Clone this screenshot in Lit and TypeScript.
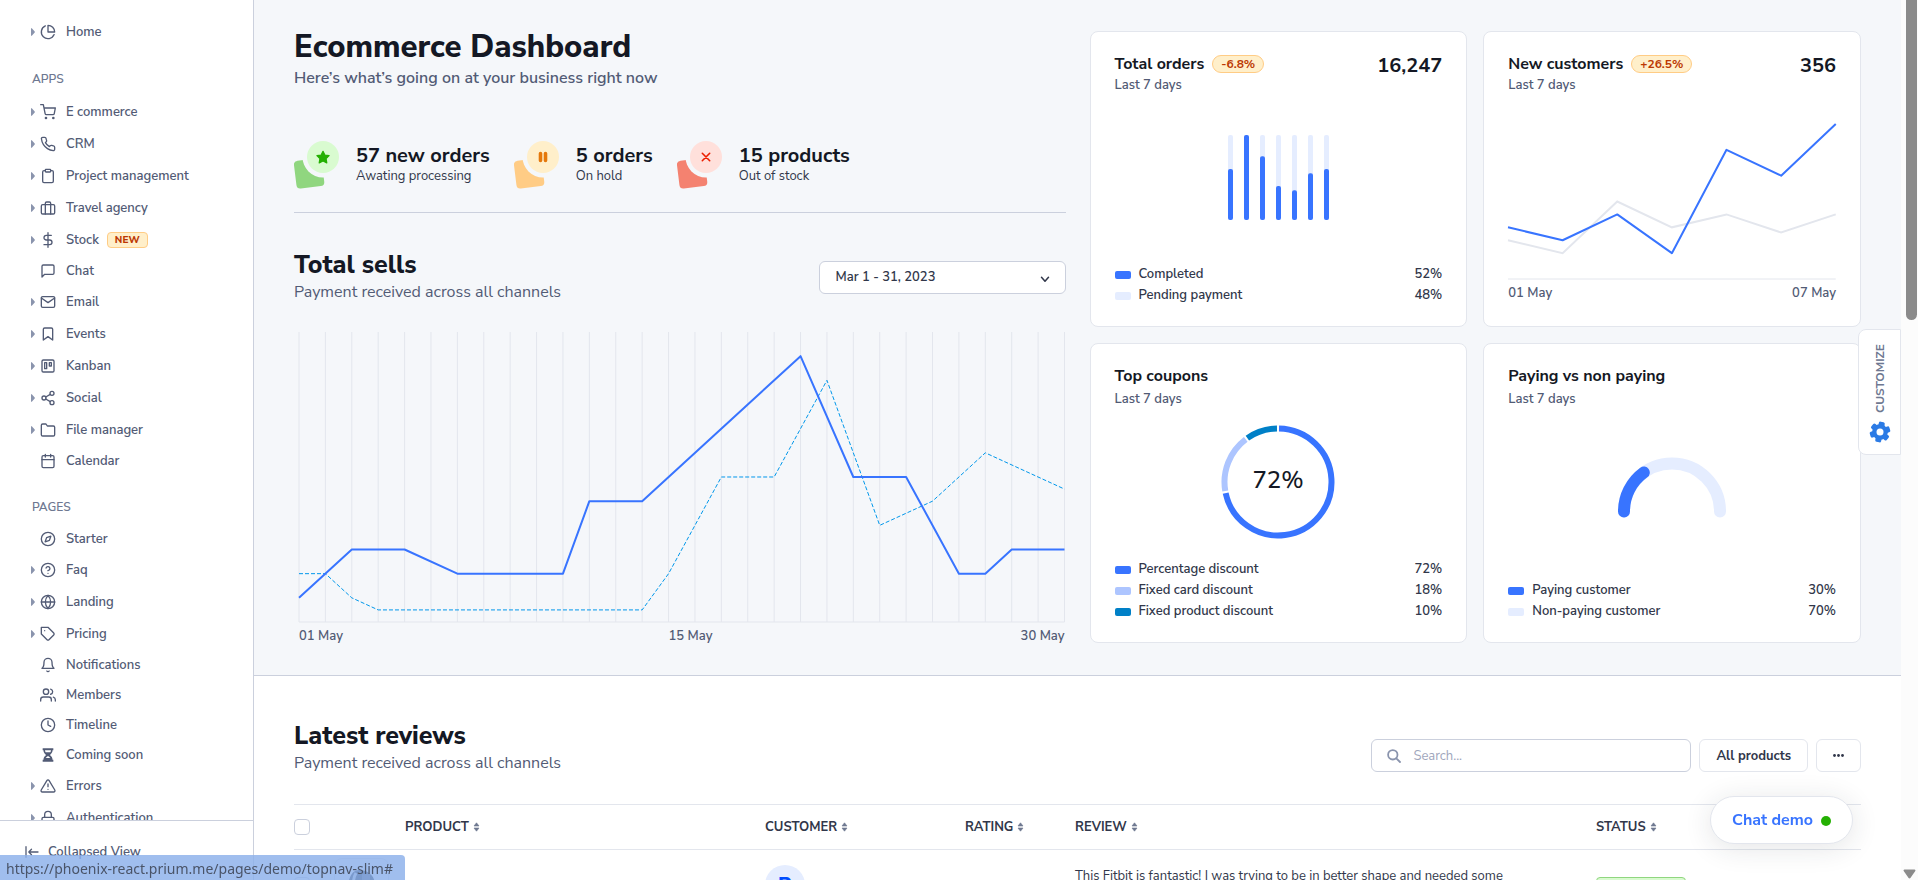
import { LitElement, html, svg, css, nothing, type TemplateResult } from "lit";
import { customElement, property } from "lit/decorators.js";

const ICONS: Record<string, TemplateResult> = {
  pie: svg`<path d="M21.21 15.89A10 10 0 1 1 8 2.83"/><path d="M22 12A10 10 0 0 0 12 2v10z"/>`,
  cart: svg`<circle cx="9" cy="21" r="1"/><circle cx="20" cy="21" r="1"/><path d="M1 1h4l2.68 13.39a2 2 0 0 0 2 1.61h9.72a2 2 0 0 0 2-1.61L23 6H6"/>`,
  phone: svg`<path d="M22 16.92v3a2 2 0 0 1-2.18 2 19.79 19.79 0 0 1-8.63-3.07 19.5 19.5 0 0 1-6-6 19.79 19.79 0 0 1-3.07-8.67A2 2 0 0 1 4.11 2h3a2 2 0 0 1 2 1.72 12.84 12.84 0 0 0 .7 2.81 2 2 0 0 1-.45 2.11L8.09 9.91a16 16 0 0 0 6 6l1.27-1.27a2 2 0 0 1 2.11-.45 12.84 12.84 0 0 0 2.81.7A2 2 0 0 1 22 16.92z"/>`,
  clipboard: svg`<path d="M16 4h2a2 2 0 0 1 2 2v14a2 2 0 0 1-2 2H6a2 2 0 0 1-2-2V6a2 2 0 0 1 2-2h2"/><rect x="8" y="2" width="8" height="4" rx="1"/>`,
  briefcase: svg`<rect x="2" y="7" width="20" height="14" rx="2"/><path d="M16 21V5a2 2 0 0 0-2-2h-4a2 2 0 0 0-2 2v16"/>`,
  dollar: svg`<path d="M12 1v22M17 5H9.5a3.5 3.5 0 0 0 0 7h5a3.5 3.5 0 0 1 0 7H6"/>`,
  message: svg`<path d="M21 15a2 2 0 0 1-2 2H7l-4 4V5a2 2 0 0 1 2-2h14a2 2 0 0 1 2 2z"/>`,
  mail: svg`<path d="M4 4h16a2 2 0 0 1 2 2v12a2 2 0 0 1-2 2H4a2 2 0 0 1-2-2V6a2 2 0 0 1 2-2z"/><path d="M22 6l-10 7L2 6"/>`,
  bookmark: svg`<path d="M19 21l-7-5-7 5V5a2 2 0 0 1 2-2h10a2 2 0 0 1 2 2z"/>`,
  trello: svg`<rect x="3" y="3" width="18" height="18" rx="2"/><rect x="7" y="7" width="3" height="9"/><rect x="14" y="7" width="3" height="5"/>`,
  share: svg`<circle cx="18" cy="5" r="3"/><circle cx="6" cy="12" r="3"/><circle cx="18" cy="19" r="3"/><path d="M8.59 13.51l6.83 3.98M15.41 6.51l-6.82 3.98"/>`,
  folder: svg`<path d="M22 19a2 2 0 0 1-2 2H4a2 2 0 0 1-2-2V5a2 2 0 0 1 2-2h5l2 3h9a2 2 0 0 1 2 2z"/>`,
  calendar: svg`<rect x="3" y="4" width="18" height="18" rx="2"/><path d="M16 2v4M8 2v4M3 10h18"/>`,
  compass: svg`<circle cx="12" cy="12" r="10"/><path d="M16.24 7.76l-2.12 6.36-6.36 2.12 2.12-6.36z"/>`,
  help: svg`<circle cx="12" cy="12" r="10"/><path d="M9.09 9a3 3 0 0 1 5.83 1c0 2-3 3-3 3M12 17h.01"/>`,
  globe: svg`<circle cx="12" cy="12" r="10"/><path d="M2 12h20M12 2a15.3 15.3 0 0 1 4 10 15.3 15.3 0 0 1-4 10 15.3 15.3 0 0 1-4-10 15.3 15.3 0 0 1 4-10z"/>`,
  tag: svg`<path d="M20.59 13.41l-7.17 7.17a2 2 0 0 1-2.83 0L2 12V2h10l8.59 8.59a2 2 0 0 1 0 2.82zM7 7h.01"/>`,
  bell: svg`<path d="M18 8A6 6 0 0 0 6 8c0 7-3 9-3 9h18s-3-2-3-9M13.73 21a2 2 0 0 1-3.46 0"/>`,
  users: svg`<path d="M17 21v-2a4 4 0 0 0-4-4H5a4 4 0 0 0-4 4v2"/><circle cx="9" cy="7" r="4"/><path d="M23 21v-2a4 4 0 0 0-3-3.87M16 3.13a4 4 0 0 1 0 7.75"/>`,
  clock: svg`<circle cx="12" cy="12" r="10"/><path d="M12 6v6l4 2"/>`,
  hourglass: svg`<path fill="currentColor" stroke="none" fill-rule="evenodd" d="M4 2h16v3h-1.200c0 3-1.500 5-4 7 2.500 2 4 4 4 7H20v3H4v-3h1.200c0-3 1.500-5 4-7-2.500-2-4-4-4-7H4zM7.500 5c.1 1 .4 2 .9 2.800h7.200c.5-.8.8-1.800.9-2.800zM12 13.500c-1.600 1-2.700 1.900-3.400 3h6.800c-.7-1.100-1.800-2-3.400-3z"/>`,
  alert: svg`<path d="M10.29 3.86L1.82 18a2 2 0 0 0 1.71 3h16.94a2 2 0 0 0 1.71-3L13.71 3.86a2 2 0 0 0-3.42 0zM12 9v4M12 17h.01"/>`,
  lock: svg`<rect x="3" y="11" width="18" height="11" rx="2"/><path d="M7 11V7a5 5 0 0 1 10 0v4"/>`,
};

const icon = (name: string) =>
  html`<svg class="icon" viewBox="0 0 24 24" width="16" height="16" aria-hidden="true">${ICONS[name]}</svg>`;

interface Item { label: string; icon: string; sub?: boolean; badge?: string }
const HOME: Item[] = [{ label: "Home", icon: "pie", sub: true }];
const APPS: Item[] = [
  { label: "E commerce", icon: "cart", sub: true },
  { label: "CRM", icon: "phone", sub: true },
  { label: "Project management", icon: "clipboard", sub: true },
  { label: "Travel agency", icon: "briefcase", sub: true },
  { label: "Stock", icon: "dollar", sub: true, badge: "NEW" },
  { label: "Chat", icon: "message" },
  { label: "Email", icon: "mail", sub: true },
  { label: "Events", icon: "bookmark", sub: true },
  { label: "Kanban", icon: "trello", sub: true },
  { label: "Social", icon: "share", sub: true },
  { label: "File manager", icon: "folder", sub: true },
  { label: "Calendar", icon: "calendar" },
];
const PAGES: Item[] = [
  { label: "Starter", icon: "compass" },
  { label: "Faq", icon: "help", sub: true },
  { label: "Landing", icon: "globe", sub: true },
  { label: "Pricing", icon: "tag", sub: true },
  { label: "Notifications", icon: "bell" },
  { label: "Members", icon: "users" },
  { label: "Timeline", icon: "clock" },
  { label: "Coming soon", icon: "hourglass" },
  { label: "Errors", icon: "alert", sub: true },
  { label: "Authentication", icon: "lock", sub: true },
];

const base = css`
  * { box-sizing: border-box; }
  h1, h2, h3, p, ul { margin: 0; padding: 0; }
  button, input, select { font: inherit; color: inherit; margin: 0; }
  a { color: inherit; text-decoration: none; }
  svg { display: block; flex: none; }
`;

@customElement("side-nav")
class SideNav extends LitElement {
  static styles = [base, css`
    :host { display: flex; flex-direction: column; min-height: 0; background: #fff; border-right: 1px solid #cbd0dd; color: #525b75; font-size: 13px; font-weight: 600; }
    .scroll { flex: 1; min-height: 0; overflow: hidden; padding: 16px 0 0 31px; }
    ul { list-style: none; }
    .label { margin: 23px 0 9px 1px; font-size: 12px; line-height: 16px; color: #6e7891; font-weight: 600; }
    .item { display: flex; align-items: center; height: 30px; }
    .sub { height: 32px; }
    .caret { width: 9px; }
    .icon { fill: none; stroke: currentColor; stroke-width: 2; stroke-linecap: round; stroke-linejoin: round; margin-right: 10px; }
    .badge { margin-left: 8px; border: 1px solid #ffcc85; background: #ffefca; color: #bc3803; border-radius: 4px; font-size: 10px; font-weight: 800; line-height: 14px; padding: 0 7px; }
    .foot { display: flex; align-items: center; height: 60px; border: 0; border-top: 1px solid #cbd0dd; background: none; padding: 2px 0 0 25px; gap: 9px; text-align: left; }
  `];

  private list(items: Item[]) {
    return html`<ul>${items.map((i) => html`<li><a href="#" class="item ${i.sub ? "sub" : ""}">
      <span class="caret">${i.sub ? html`<svg width="4" height="8" viewBox="0 0 4 8" aria-hidden="true"><path d="M0 .6C0 .2.500 0 .8.300L3.700 3.500c.3.300.3.700 0 1L.8 7.700C.500 8 0 7.800 0 7.400z" fill="#8a94ad"/></svg>` : nothing}</span>
      ${icon(i.icon)}<span>${i.label}</span>${i.badge ? html`<span class="badge">${i.badge}</span>` : nothing}</a></li>`)}</ul>`;
  }

  render() {
    return html`
      <nav class="scroll">
        ${this.list(HOME)}
        <p class="label">APPS</p>${this.list(APPS)}
        <p class="label">PAGES</p>${this.list(PAGES)}
      </nav>
      <button class="foot" type="button">
        <svg width="14" height="12" viewBox="0 0 14 12" fill="none" stroke="currentColor" stroke-width="1.300" stroke-linecap="round" stroke-linejoin="round" aria-hidden="true"><path d="M1 .7v10.600M13 6H4M6.500 3.300L3.800 6l2.700 2.700"/></svg>
        <span>Collapsed View</span>
      </button>`;
  }
}

const BLUE: [number, number][] = [[0, 1], [2, 3], [4, 3], [6, 2], [10, 2], [11, 5], [13, 5], [19, 11], [21, 6], [23, 6], [25, 2], [26, 2], [27, 3], [29, 3]];
const DASHED: [number, number][] = [[0, 2], [1, 2], [2, 1], [3, 0.5], [13, 0.5], [14, 2], [16, 6], [18, 6], [20, 10], [22, 4], [24, 5], [26, 7], [29, 5.5]];
const NEW_NOW = [4, 3, 5, 2, 10, 8, 12];
const NEW_BEFORE = [3, 2, 6, 4, 5, 3.6, 5];
const pts = (p: [number, number][]) => p.map(([x, y]) => `${x},${12 - y}`).join(" ");
const seq = (v: number[]) => pts(v.map((y, x) => [x, y] as [number, number]));

@customElement("stat-card")
class StatCard extends LitElement {
  @property() heading = "";
  @property() change = "";
  @property() total = "";
  @property({ type: Boolean, reflect: true }) roomy = false;
  @property({ attribute: false }) legend: [string, string, string][] = [];

  static styles = [base, css`
    :host { display: flex; flex-direction: column; background: #fff; border: 1px solid #e3e6ed; border-radius: 8px; padding: 22px 24px 20px; min-width: 0; }
    .head { display: flex; justify-content: space-between; }
    .title { display: flex; align-items: center; gap: 8px; }
    h3 { font-size: 16px; line-height: 20px; font-weight: 700; color: #141824; }
    .sub { font-size: 13px; line-height: 20px; font-weight: 600; color: #525b75; margin-top: 1px; }
    :host([roomy]) .sub { margin-top: 3px; }
    .pill { border: 1px solid #ffcc85; background: #ffefca; color: #bc3803; border-radius: 9px; font-size: 12px; line-height: 16px; font-weight: 700; padding: 0 8px; }
    .total { font-size: 20px; line-height: 24px; font-weight: 700; color: #141824; }
    .body { flex: 1; display: flex; flex-direction: column; }
    .row { display: flex; align-items: center; justify-content: space-between; font-size: 13px; line-height: 21px; font-weight: 600; color: #31374a; }
    .key { display: flex; align-items: center; gap: 8px; }
    .swatch { width: 16px; height: 8px; border-radius: 2px; }
    ul { list-style: none; }
  `];

  render() {
    return html`
      <div class="head">
        <div>
          <div class="title"><h3>${this.heading}</h3>${this.change ? html`<span class="pill">${this.change}</span>` : nothing}</div>
          <p class="sub">Last 7 days</p>
        </div>
        ${this.total ? html`<div class="total">${this.total}</div>` : nothing}
      </div>
      <div class="body"><slot></slot></div>
      <ul>${this.legend.map(([name, value, color]) => html`<li class="row">
        <span class="key"><span class="swatch" style="background:${color}"></span>${name}</span><span>${value}</span></li>`)}</ul>`;
  }
}

const arc = (from: number, to: number, r: number, c: number) => {
  const p = (f: number) => {
    const a = f * 2 * Math.PI - Math.PI / 2;
    return `${(c + r * Math.cos(a)).toFixed(2)} ${(c + r * Math.sin(a)).toFixed(2)}`;
  };
  return `M${p(from)}A${r} ${r} 0 ${to - from > 0.5 ? 1 : 0} 1 ${p(to)}`;
};

@customElement("app-root")
class AppRoot extends LitElement {
  static styles = [base, css`
    :host { display: grid; grid-template-columns: 254px minmax(0, 1fr) 17px; height: 100vh; overflow: hidden; background: #fff; font-family: "Nunito Sans", "Open Sans", sans-serif; font-size: 13px; color: #31374a; }
    main { min-width: 0; overflow: hidden; }
    .overview { display: grid; grid-template-columns: minmax(0, 1fr) minmax(0, 1fr); column-gap: 24px; align-items: start; padding: 31px 40px 29px; background: #f5f7fa; border-bottom: 1px solid #cbd0dd; }
    h1 { font-size: 31px; line-height: 32px; font-weight: 800; color: #141824; }
    h2 { font-size: 25px; line-height: 32px; font-weight: 800; color: #141824; }
    .lead { font-size: 16px; line-height: 24px; font-weight: 600; color: #525b75; margin-top: 3px; }
    .note { font-size: 16px; line-height: 22px; font-weight: 400; color: #525b75; }
    .stats { display: flex; gap: 24px; margin-top: 51px; padding-bottom: 23px; border-bottom: 1px solid #cbd0dd; }
    .stat { display: flex; gap: 16px; }
    .stat h3 { margin-top: 1px; font-size: 20px; line-height: 28px; font-weight: 700; color: #141824; }
    .stat p { font-size: 13px; line-height: 12px; color: #31374a; }
    .bar { display: flex; justify-content: space-between; align-items: center; margin-top: 36px; }
    .pick { position: relative; width: 247px; margin-top: 2px; }
    .pick select { appearance: none; display: block; width: 100%; height: 33px; border: 1px solid #cbd0dd; border-radius: 6px; background: #fff; padding: 0 16px; font-weight: 600; }
    .pick svg { position: absolute; right: 16px; top: 15px; pointer-events: none; }
    .plot { margin: 29px 1px 0 5px; }
    .plot svg { width: 100%; height: 290px; overflow: visible; }
    .grid { stroke: #e3e6ed; fill: none; stroke-width: 1; }
    .line { stroke: #3874ff; fill: none; stroke-width: 2; stroke-linejoin: round; }
    .prev { stroke: #e3e6ed; fill: none; stroke-width: 2; }
    .dash { stroke: #0097eb; fill: none; stroke-width: 1; stroke-dasharray: 4 2; }
    .axis { display: grid; grid-template-columns: 14fr 15fr; font-weight: 600; line-height: 20px; color: #525b75; margin-top: 4px; }
    .ends { display: flex; justify-content: space-between; }
    .cards { display: grid; grid-template-columns: minmax(0, 1fr) minmax(0, 1fr); gap: 16px; }
    .bars { margin: auto; height: 169px; display: flex; align-items: center; padding-bottom: 4px; }
    .trend { margin-top: 29px; }
    .trend svg { width: 100%; height: 155px; overflow: visible; }
    .trend .ends { font-weight: 600; line-height: 20px; color: #525b75; margin-top: 4px; }
    .ring { margin: auto; height: 150px; display: flex; align-items: center; padding-bottom: 4px; }
    .ring text { font-size: 24px; font-weight: 500; fill: #141824; text-anchor: middle; }
    .gauge { margin: auto; }
    .reviews { padding: 44px 40px 0; }
    .top { display: flex; justify-content: space-between; align-items: flex-end; }
    .tools { display: flex; gap: 8px; padding-bottom: 2px; }
    .search { display: flex; align-items: center; gap: 12px; width: 320px; height: 33px; border: 1px solid #cbd0dd; border-radius: 6px; padding: 0 15px; }
    .search input { flex: 1; min-width: 0; border: 0; outline: 0; background: none; padding: 0; font-weight: 400; }
    .search input::placeholder { color: #9fa6bc; opacity: 1; }
    .btn { height: 33px; border: 1px solid #e3e6ed; border-radius: 6px; background: #fff; padding: 0 16px; font-weight: 700; color: #31374a; }
    table { width: 100%; margin-top: 30px; border-collapse: collapse; table-layout: fixed; border-top: 1px solid #e3e6ed; }
    th { height: 45px; padding: 0; text-align: left; font-weight: 700; color: #31374a; border-bottom: 1px solid #e3e6ed; }
    td { height: 70px; padding: 0; }
    .c-check { width: 40px; } .c-img { width: 71px; } .c-product { width: 360px; } .c-customer { width: 200px; } .c-rating { width: 110px; } .c-status { width: 265px; }
    .sort { display: inline-flex; align-items: center; gap: 4px; border: 0; background: none; padding: 0; }
    .check { appearance: none; display: block; width: 16px; height: 16px; border: 1px solid #cbd0dd; border-radius: 4px; background: #fff; }
    .thumb { display: flex; justify-content: center; width: 55px; height: 53px; border: 1px solid #e3e6ed; border-radius: 8px; padding-top: 11px; }
    .avatar { display: flex; align-items: center; justify-content: center; width: 40px; height: 40px; border-radius: 50%; background: #e5edff; color: #004dff; font-size: 20px; font-weight: 800; }
    .review { vertical-align: top; padding-top: 16px; line-height: 20px; color: #31374a; white-space: nowrap; }
    .ok { display: block; width: 90px; text-align: center; border: 1px solid #90d67f; background: #d9fbd0; color: #1c6c09; border-radius: 4px; font-size: 10px; line-height: 14px; font-weight: 800; }
    .track { background: #fcfcfc; display: flex; flex-direction: column; justify-content: space-between; align-items: center; padding-bottom: 1px; }
    .thumbbar { width: 11px; height: 320px; border-radius: 0 0 6px 6px; background: #8b8b8b; margin-left: 3px; }
    .customize { position: fixed; right: 17px; top: 329px; width: 43px; height: 126px; display: flex; flex-direction: column; align-items: center; justify-content: center; gap: 8px; border: 1px solid #e3e6ed; border-radius: 8px 0 0 8px; background: #fff; padding: 3px 0 0; color: #6e7891; font-size: 12px; font-weight: 700; }
    .vertical { writing-mode: vertical-rl; transform: rotate(180deg); line-height: 16px; }
    .chat { position: fixed; right: 65px; bottom: 36px; height: 48px; display: flex; align-items: center; gap: 8px; padding: 0 21px; border: 1px solid #e3e6ed; border-radius: 24px; background: #fff; color: #3874ff; font-size: 16px; font-weight: 700; box-shadow: 0 4px 28px rgba(36, 40, 46, 0.12); }
    .dot { width: 10px; height: 10px; border-radius: 50%; background: #25b003; margin-top: 2px; }
    .url { position: fixed; left: 0; bottom: 0; width: 405px; height: 25px; border-radius: 0 4px 0 0; background: rgba(139, 176, 234, 0.82); color: #4a5468; font-family: "Noto Sans", sans-serif; font-size: 14px; line-height: 28px; padding-left: 6px; white-space: nowrap; }
  `];

  private stat(title: string, text: string, square: string, circle: string, mark: TemplateResult) {
    return html`<div class="stat">
      <svg width="46" height="48" viewBox="1 0 46 48" aria-hidden="true">
        <rect width="28" height="28" rx="4" transform="translate(.5 20.200) rotate(-7)" fill=${square}/>
        <circle cx="30" cy="16" r="20.500" fill="#f5f7fa"/><circle cx="30" cy="16" r="16" fill=${circle}/>${mark}
      </svg>
      <div><h3>${title}</h3><p>${text}</p></div>
    </div>`;
  }

  private th(label: string) {
    return html`<button class="sort" type="button">${label}<svg width="7" height="10" viewBox="0 0 7 10" fill="#6e7891" aria-hidden="true"><path d="M3.500.8L6 4H1zM3.500 9.200L1 6h5z" stroke="#6e7891" stroke-width=".6" stroke-linejoin="round"/></svg></button>`;
  }

  render() {
    const gap = 0.003;
    return html`
      <side-nav></side-nav>
      <main>
        <section class="overview">
          <div>
            <h1>Ecommerce Dashboard</h1>
            <p class="lead">Here’s what’s going on at your business right now</p>
            <div class="stats">
              ${this.stat("57 new orders", "Awating processing", "#90d67f", "#d9fbd0", svg`<path d="M30 10.300l1.900 3.800 4.200.6-3 3 .7 4.200-3.800-2-3.800 2 .7-4.200-3-3 4.200-.6z" fill="#25b003" stroke="#25b003" stroke-width="1.200" stroke-linejoin="round"/>`)}
              ${this.stat("5 orders", "On hold", "#ffcc85", "#ffefca", svg`<path d="M27.500 12.500v7M32.500 12.500v7" stroke="#e5780b" stroke-width="3.600" stroke-linecap="round"/>`)}
              ${this.stat("15 products", "Out of stock", "#f48270", "#ffe0db", svg`<path d="M26.300 12.300l7.400 7.400M33.700 12.300l-7.400 7.400" stroke="#ec1f00" stroke-width="1.600" stroke-linecap="round"/>`)}
            </div>
            <div class="bar">
              <div><h2>Total sells</h2><p class="note">Payment received across all channels</p></div>
              <div class="pick">
                <select aria-label="Period"><option>Mar 1 - 31, 2023</option></select>
                <svg width="10" height="7" viewBox="0 0 10 7" fill="none" stroke="#31374a" stroke-width="1.500" stroke-linecap="round" stroke-linejoin="round" aria-hidden="true"><path d="M1.500 1.200L5 5.300l3.500-4.100"/></svg>
              </div>
            </div>
            <div class="plot">
              <svg viewBox="0 0 29 12" preserveAspectRatio="none" role="img" aria-label="Total sells">
                ${Array.from({ length: 30 }, (_, i) => svg`<path class="grid" vector-effect="non-scaling-stroke" d="M${i} 0V12"/>`)}
                <path class="grid" vector-effect="non-scaling-stroke" d="M0 12H29"/>
                <polyline class="dash" vector-effect="non-scaling-stroke" points=${pts(DASHED)}/>
                <polyline class="line" vector-effect="non-scaling-stroke" points=${pts(BLUE)}/>
              </svg>
              <div class="axis"><span>01 May</span><span class="ends"><span>15 May</span><span>30 May</span></span></div>
            </div>
          </div>
          <div class="cards">
            <stat-card heading="Total orders" change="-6.8%" total="16,247" .legend=${[["Completed", "52%", "#3874ff"], ["Pending payment", "48%", "#e5edff"]]}>
              <div class="bars"><svg width="101" height="85" viewBox="0 0 101 85" role="img" aria-label="Completed orders by day">
                ${[0.6, 1, 0.75, 0.4, 0.35, 0.55, 0.6].map((v, i) => svg`<rect x=${i * 16} width="5" height="85" rx="2" fill="#e5edff"/><rect x=${i * 16} y=${85 - v * 85} width="5" height=${v * 85} rx="2" fill="#3874ff"/>`)}
              </svg></div>
            </stat-card>
            <stat-card heading="New customers" change="+26.5%" total="356">
              <div class="trend">
                <svg viewBox="0 0 6 12" preserveAspectRatio="none" role="img" aria-label="New customers by day">
                  <path class="grid" vector-effect="non-scaling-stroke" d="M0 12H6"/>
                  <polyline class="prev" vector-effect="non-scaling-stroke" points=${seq(NEW_BEFORE)}/>
                  <polyline class="line" vector-effect="non-scaling-stroke" points=${seq(NEW_NOW)}/>
                </svg>
                <div class="ends"><span>01 May</span><span>07 May</span></div>
              </div>
            </stat-card>
            <stat-card roomy heading="Top coupons" .legend=${[["Percentage discount", "72%", "#3874ff"], ["Fixed card discount", "18%", "#adc5ff"], ["Fixed product discount", "10%", "#0080c7"]]}>
              <div class="ring"><svg width="114" height="114" viewBox="0 0 114 114" fill="none" stroke-width="6" role="img" aria-label="Coupon share">
                <path d=${arc(gap, 0.72 - gap, 53.5, 57)} stroke="#3874ff"/>
                <path d=${arc(0.72 + gap, 0.9 - gap, 53.5, 57)} stroke="#adc5ff"/>
                <path d=${arc(0.9 + gap, 1 - gap, 53.5, 57)} stroke="#0080c7"/>
                <text x="57" y="63">72%</text>
              </svg></div>
            </stat-card>
            <stat-card roomy heading="Paying vs non paying" .legend=${[["Paying customer", "30%", "#3874ff"], ["Non-paying customer", "70%", "#e5edff"]]}>
              <div class="gauge"><svg width="108" height="76" viewBox="0 0 108 76" fill="none" stroke-width="12" stroke-linecap="round" role="img" aria-label="Paying share">
                <path d="M6 54.500A48 48 0 0 1 102 54.500" stroke="#e5edff"/><path d="M6 54.500A48 48 0 0 1 25.800 15.500" stroke="#3874ff"/>
              </svg></div>
            </stat-card>
          </div>
        </section>
        <section class="reviews">
          <div class="top">
            <div><h2>Latest reviews</h2><p class="note">Payment received across all channels</p></div>
            <div class="tools">
              <label class="search">
                <svg width="14" height="14" viewBox="0 0 14 14" fill="none" stroke="#8a94ad" stroke-width="1.800" stroke-linecap="round" aria-hidden="true"><circle cx="5.800" cy="5.800" r="4.700"/><path d="M9.300 9.300l3.700 3.700"/></svg>
                <input type="search" placeholder="Search..." aria-label="Search reviews">
              </label>
              <button class="btn" type="button">All products</button>
              <button class="btn" type="button" aria-label="More"><svg width="11" height="3" viewBox="0 0 11 3" fill="#31374a"><circle cx="1.500" cy="1.500" r="1.400"/><circle cx="5.500" cy="1.500" r="1.400"/><circle cx="9.500" cy="1.500" r="1.400"/></svg></button>
            </div>
          </div>
          <table>
            <colgroup><col class="c-check"><col class="c-img"><col class="c-product"><col class="c-customer"><col class="c-rating"><col><col class="c-status"></colgroup>
            <thead><tr>
              <th><input class="check" type="checkbox" aria-label="Select all"></th><th></th>
              <th>${this.th("PRODUCT")}</th><th>${this.th("CUSTOMER")}</th><th>${this.th("RATING")}</th><th>${this.th("REVIEW")}</th><th>${this.th("STATUS")}</th>
            </tr></thead>
            <tbody><tr>
              <td><input class="check" type="checkbox" aria-label="Select review"></td>
              <td><div class="thumb"><svg width="27" height="36" viewBox="0 0 27 36" aria-hidden="true"><path d="M0 16C1 6 5 0 11 0s15 3 16 14v22H0z" fill="#2b3242"/><path d="M8 3C4 10 5 20 8 30" stroke="#c9cfda" stroke-width="3" fill="none"/><path d="M14 4h8v20h-8z" fill="#596274"/></svg></div></td>
              <td></td>
              <td><div class="avatar">R</div></td>
              <td></td>
              <td class="review">This Fitbit is fantastic! I was trying to be in better shape and needed some</td>
              <td><span class="ok">APPROVED</span></td>
            </tr></tbody>
          </table>
        </section>
      </main>
      <div class="track" aria-hidden="true">
        <div class="thumbbar"></div>
        <svg width="13" height="10" viewBox="0 0 13 10"><path d="M1.500.5h10c.8 0 1.200.8.8 1.400L7.400 9c-.4.600-1.400.6-1.800 0L.7 1.900C.300 1.300.7.500 1.500.5z" fill="#8b8b8b"/></svg>
      </div>
      <button class="customize" type="button">
        <span class="vertical">CUSTOMIZE</span>
        <svg width="22" height="22" viewBox="0 0 22 22" aria-hidden="true"><g transform="rotate(12 11 11)" fill="#2c7be5">
          ${[0, 60, 120].map((a) => svg`<rect x="8" y=".7" width="6" height="20.600" rx="1.600" transform="rotate(${a} 11 11)"/>`)}<circle cx="11" cy="11" r="7.800"/></g><circle cx="11" cy="11" r="3.500" fill="#fff"/></svg>
      </button>
      <button class="chat" type="button">Chat demo<span class="dot"></span></button>
      <div class="url">https://phoenix-react.prium.me/pages/demo/topnav-slim#</div>`;
  }
}
